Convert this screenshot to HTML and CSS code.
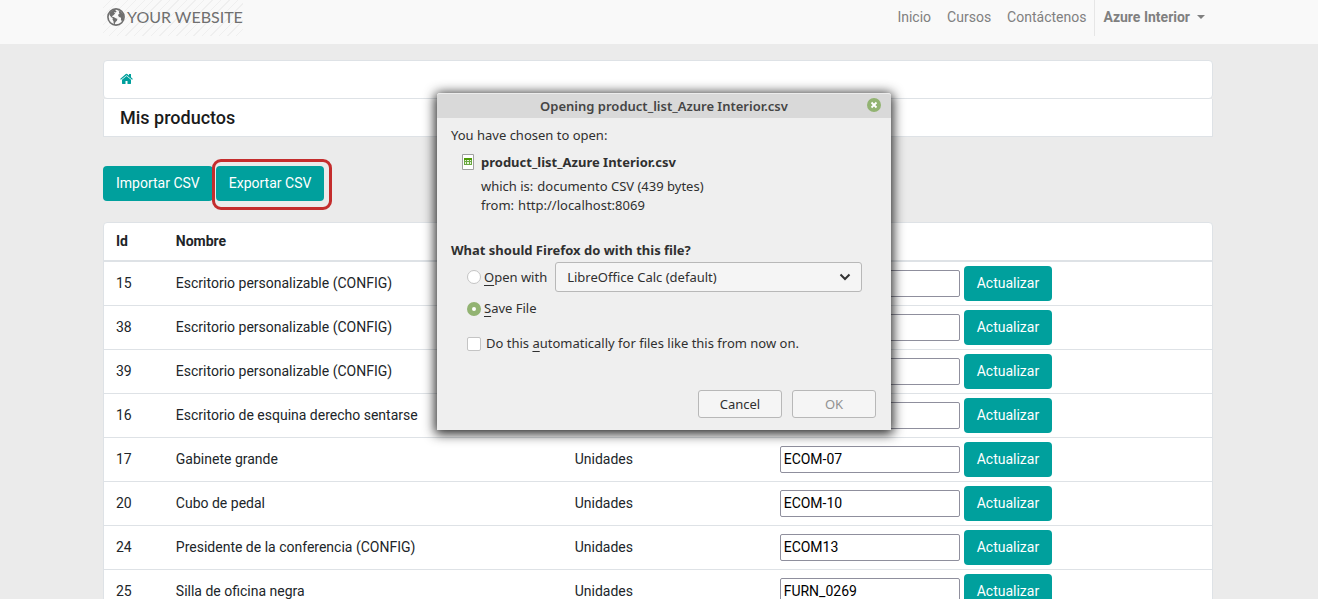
FILE: index.html
```html
<!DOCTYPE html>
<html lang="es">
<head>
<meta charset="utf-8">
<title>Mis productos</title>
<meta name="viewport" content="width=device-width, initial-scale=1">
<link rel="stylesheet" href="styles.css">
</head>
<body>
<header class="site-header">
  <div class="container header-row">
    <a class="brand" href="#">
      <svg class="brand-globe" viewBox="0 0 18 18" aria-hidden="true">
        <circle cx="9" cy="9" r="8.1" fill="none" stroke="currentColor" stroke-width="1.6"/>
        <path fill="currentColor" d="M3.2 4.1 5.6 2.2 8.8 1.3 8.3 2.4 9.6 3.2 8.6 4.5 7.6 4.1 7.2 5 8.3 5.5 7.1 6.4 6.2 7.6 5.1 8.1 5.5 9.1 6.6 9.1 8.3 10.1 10.4 11.1 9.9 12.8 8.5 13.9 7.6 16.2 6.8 15.9 6.5 13.3 5.5 11.6 5.8 10.1 4.3 9.3 2.9 7.6 2.2 6z"/>
        <path fill="currentColor" d="M10.5 2 13.4 2.9 15.8 5.6 16.8 9 16.2 12.1 14.9 13.6 13.9 11.5 14.1 9.8 12.6 9.3 11.2 8.1 11.3 6.4 12.6 5.4 11.8 4.6 12.4 3.7z"/>
      </svg>
      <span>YOUR WEBSITE</span>
    </a>
    <nav class="nav">
      <a href="#">Inicio</a>
      <a href="#">Cursos</a>
      <a href="#">Contáctenos</a>
      <button class="user-menu" type="button">Azure Interior<span class="caret"></span></button>
    </nav>
  </div>
</header>

<main class="container">
  <nav class="breadcrumb">
    <a href="#" aria-label="Inicio">
      <svg viewBox="0 0 13 12" width="13" height="12" aria-hidden="true">
        <path fill="currentColor" d="M6.500 3 2 6.700V10.500c0 .3.200.500.500.500H5.500V8h2v3h3c.3 0 .5-.2.5-.5V6.700z"/>
        <path fill="currentColor" d="M12.900 5.900 11 4.300V1H9v1.600L7.200 1.100a1.100 1.100 0 0 0-1.400 0L.1 5.900l.8.900L6.500 2.200l5.600 4.600z"/>
      </svg>
    </a>
  </nav>
  <h1 class="page-title">Mis productos</h1>

  <div class="actions">
    <button class="btn" type="button">Importar CSV</button>
    <button class="btn highlighted" type="button">Exportar CSV</button>
  </div>

  <div class="card">
    <table class="products">
      <colgroup><col class="col-id"><col class="col-name"><col class="col-unit"><col></colgroup>
      <thead>
        <tr><th>Id</th><th>Nombre</th><th></th><th></th></tr>
      </thead>
      <tbody>
        <tr><td>15</td><td>Escritorio personalizable (CONFIG)</td><td></td><td><form class="ref-form"><input type="text" aria-label="Referencia 15"><button class="btn" type="button">Actualizar</button></form></td></tr>
        <tr><td>38</td><td>Escritorio personalizable (CONFIG)</td><td></td><td><form class="ref-form"><input type="text" aria-label="Referencia 38"><button class="btn" type="button">Actualizar</button></form></td></tr>
        <tr><td>39</td><td>Escritorio personalizable (CONFIG)</td><td></td><td><form class="ref-form"><input type="text" aria-label="Referencia 39"><button class="btn" type="button">Actualizar</button></form></td></tr>
        <tr><td>16</td><td>Escritorio de esquina derecho sentarse</td><td></td><td><form class="ref-form"><input type="text" aria-label="Referencia 16"><button class="btn" type="button">Actualizar</button></form></td></tr>
        <tr><td>17</td><td>Gabinete grande</td><td>Unidades</td><td><form class="ref-form"><input type="text" value="ECOM-07" aria-label="Referencia 17"><button class="btn" type="button">Actualizar</button></form></td></tr>
        <tr><td>20</td><td>Cubo de pedal</td><td>Unidades</td><td><form class="ref-form"><input type="text" value="ECOM-10" aria-label="Referencia 20"><button class="btn" type="button">Actualizar</button></form></td></tr>
        <tr><td>24</td><td>Presidente de la conferencia (CONFIG)</td><td>Unidades</td><td><form class="ref-form"><input type="text" value="ECOM13" aria-label="Referencia 24"><button class="btn" type="button">Actualizar</button></form></td></tr>
        <tr><td>25</td><td>Silla de oficina negra</td><td>Unidades</td><td><form class="ref-form"><input type="text" value="FURN_0269" aria-label="Referencia 25"><button class="btn" type="button">Actualizar</button></form></td></tr>
      </tbody>
    </table>
  </div>
</main>

<section class="dialog" role="dialog" aria-labelledby="dialog-title" lang="en">
  <div class="dialog-titlebar">
    <h2 id="dialog-title">Opening product_list_Azure Interior.csv</h2>
    <button class="dialog-close" type="button" aria-label="Close">
      <svg viewBox="0 0 14 14" width="14" height="14" aria-hidden="true"><circle cx="7" cy="7" r="7" fill="#92b372"/><path d="M4.500 4.500l5 5M9.500 4.500l-5 5" stroke="#fff" stroke-width="1.800"/></svg>
    </button>
  </div>
  <form class="dialog-body">
    <p>You have chosen to open:</p>
    <div class="file">
      <svg class="file-icon" viewBox="0 0 12 16" width="12" height="16" aria-hidden="true">
        <path fill="#fff" stroke="#a0a0a0" d="M.5.5h11v15H.5z"/>
        <path fill="#6aa840" d="M2 4h8v7H2z"/>
        <path fill="#4e9a06" d="M2 4h8v2H2z"/>
        <path fill="#e8f3de" d="M3 6h1v1H3zM5 6h2v1H5zM8 6h1v1H8zM3 8h1v2H3zM5 8h2v2H5zM8 8h1v2H8z"/>
      </svg>
      <div class="file-info">
        <strong>product_list_Azure Interior.csv</strong>
        <div class="file-line"><span>which is:</span><span>documento CSV (439 bytes)</span></div>
        <div class="file-line"><span>from:</span><span>http://localhost:8069</span></div>
      </div>
    </div>
    <p class="question">What should Firefox do with this file?</p>
    <div class="option option-open">
      <input type="radio" name="action" id="open-with">
      <label for="open-with"><u>O</u>pen with</label>
      <div class="select-wrap">
        <select aria-label="Application"><option>LibreOffice Calc (default)</option></select>
        <svg viewBox="0 0 12 8" width="12" height="8" aria-hidden="true"><path d="M1.500 1.500L6 6l4.500-4.500" fill="none" stroke="#333" stroke-width="2"/></svg>
      </div>
    </div>
    <div class="option option-save">
      <input type="radio" name="action" id="save-file" checked>
      <label for="save-file"><u>S</u>ave File</label>
    </div>
    <div class="option option-auto">
      <input type="checkbox" id="auto">
      <label for="auto">Do this <u>a</u>utomatically for files like this from now on.</label>
    </div>
    <div class="dialog-buttons">
      <button type="button">Cancel</button>
      <button type="button" disabled>OK</button>
    </div>
  </form>
</section>
</body>
</html>
```
FILE: styles.css
```css
* { box-sizing: border-box; }

body {
  margin: 0;
  height: 100vh;
  overflow: hidden;
  background: #ebebeb;
  color: #212529;
  font: 14px/21px Roboto, "Liberation Sans", sans-serif;
}

button, input, select { font: inherit; color: inherit; margin: 0; }
a { color: inherit; text-decoration: none; }

.container {
  max-width: 1112px;
  margin: 0 auto;
  padding-right: 2px;
}

/* Site header */
.site-header { background: #f9f9f9; padding-bottom: 8px; }
.header-row { display: flex; justify-content: space-between; height: 36px; }

.brand {
  display: flex;
  align-items: center;
  gap: 2px;
  padding: 0 0 2px 4px;
  color: #6f6f6f;
  font: 16px/34px Lato, sans-serif;
  background: repeating-linear-gradient(135deg, #f9f9f9 0 5px, #efefef 5px 6px);
}
.brand-globe { width: 18px; height: 18px; }

.nav { display: flex; color: #808080; line-height: 34px; }
.nav a { padding: 0 8px; }
.user-menu {
  display: flex;
  align-items: center;
  gap: 7px;
  height: 36px;
  padding: 0 8px 2px;
  border: 0;
  border-left: 1px solid #e6e6e6;
  background: none;
  font-weight: 700;
}
.caret {
  border: 4px solid transparent;
  border-top-color: currentColor;
  border-bottom: 0;
}

/* Page heading */
.breadcrumb {
  display: flex;
  align-items: center;
  height: 39px;
  margin-top: 16px;
  padding: 0 16px 1px;
  background: #fff;
  border: 1px solid #dee2e6;
  border-radius: 4px;
  color: #00a09d;
}
.breadcrumb a { display: flex; }
.page-title {
  margin: 0;
  padding: 8px 16px;
  background: #fff;
  border: 1px solid #dee2e6;
  border-top: 0;
  font-size: 18px;
  line-height: 21px;
  font-weight: 500;
  color: #1a1a1a;
}

.btn {
  height: 35px;
  padding: 0 13px;
  border: 0;
  border-radius: 4px;
  background: #00a09d;
  color: #fff;
}
.actions { display: flex; gap: 3px; margin: 29px 0 21px; }
.highlighted { position: relative; }
.highlighted::after {
  content: "";
  position: absolute;
  inset: -7px -8px -9px -4px;
  border: 3px solid #c42d2d;
  border-radius: 9px;
}

/* Products table */
.card { background: #fff; border: 1px solid #dee2e6; border-radius: 4px; }
.products { width: 100%; table-layout: fixed; border-collapse: separate; border-spacing: 0; }
.col-id { width: 5.4%; }
.col-name { width: 36%; }
.col-unit { width: 18.5%; }
.products th {
  height: 39px;
  padding: 0 12px;
  text-align: left;
  font-weight: 700;
  border-bottom: 2px solid #dee2e6;
}
.products td { padding: 4px 12px; border-bottom: 1px solid #dee2e6; }
.ref-form { display: flex; align-items: center; gap: 4px; }
.ref-form input {
  width: 180px;
  height: 27px;
  padding: 0 3px 2px;
  border: 1px solid #8f8f9d;
  border-radius: 2px;
  background: #fff;
  color: #000;
}

/* Download dialog */
.dialog {
  position: absolute;
  top: 93px;
  left: 437px;
  width: 454px;
  border-radius: 3px 3px 0 0;
  background: #efefef;
  color: #303030;
  box-shadow: 0 2px 12px 2px rgba(0, 0, 0, .85);
  font: 13px/19px "Noto Sans", "Open Sans", sans-serif;
}
.dialog-titlebar {
  position: relative;
  border-top: 1px solid #ececec;
  border-radius: 3px 3px 0 0;
  background: #d9d9d9;
}
.dialog-titlebar h2 {
  margin: 0;
  text-align: center;
  color: #454545;
  font-size: 13px;
  line-height: 24px;
  font-weight: 600;
}
.dialog-close {
  position: absolute;
  top: 4px;
  right: 10px;
  display: flex;
  padding: 0;
  border: 0;
  background: none;
}
.dialog-body { padding: 8px 14px 12px; }
.dialog-body p { margin: 0; }
.dialog-body u { text-underline-offset: 3px; }
.file { display: flex; gap: 7px; margin: 8px 0 26px; padding-left: 11px; }
.file-icon { margin-top: 1px; }
.file-info strong { display: block; margin-bottom: 5px; font-weight: 700; }
.file-line { display: flex; gap: 4px; }
.dialog-body .question { font-weight: 700; }
.option { display: flex; align-items: center; padding-left: 16px; }
.option input {
  appearance: none;
  width: 14px;
  height: 14px;
  border: 1px solid #c4c4c4;
  border-radius: 2px;
  background: #fff;
}
.option input[type="radio"] { border-radius: 50%; margin-right: 3px; }
.option input[type="radio"]:checked { border: 5px solid #92b372; }
.option input[type="checkbox"] { margin-right: 5px; }
.option-open { margin-top: 2px; padding-right: 15px; }
.option-save { margin-top: 7px; }
.option-auto { margin-top: 16px; }
.select-wrap { position: relative; flex: 1; margin-left: 8px; }
.select-wrap select {
  appearance: none;
  display: block;
  width: 100%;
  height: 30px;
  padding: 0 11px;
  border: 1px solid #b8b8b8;
  border-radius: 3px;
  background: #f5f5f5;
}
.select-wrap svg { position: absolute; right: 11px; top: 11px; pointer-events: none; }
.dialog-buttons { display: flex; justify-content: flex-end; gap: 10px; margin-top: 37px; padding-right: 1px; }
.dialog-buttons button {
  width: 84px;
  height: 28px;
  padding: 0;
  border: 1px solid #b8b8b8;
  border-radius: 3px;
  background: #f5f5f5;
}
.dialog-buttons button:disabled { color: #929292; }
```
